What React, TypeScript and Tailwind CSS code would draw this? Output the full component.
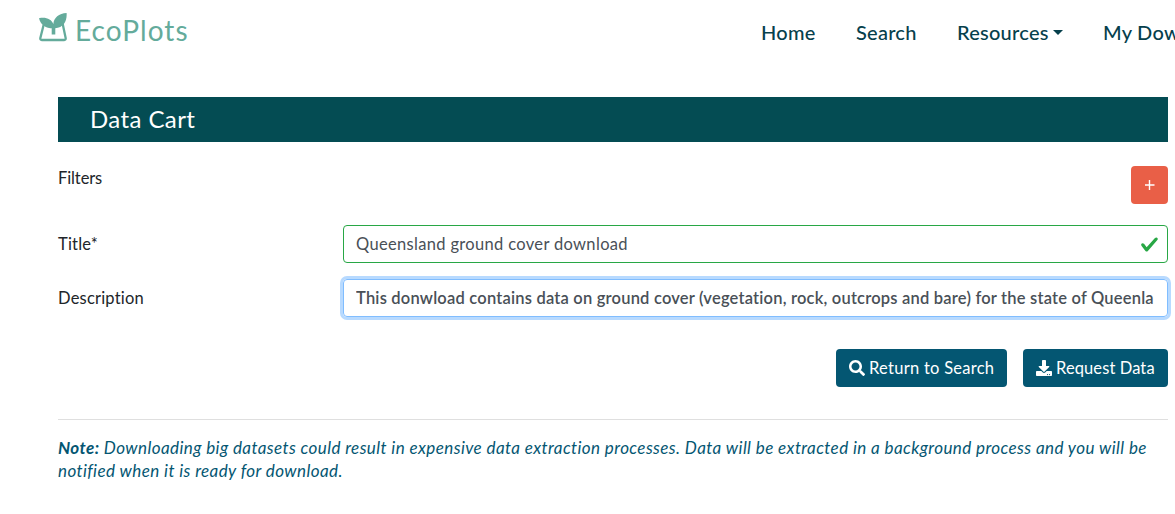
import React from "react";
import { FaDownload, FaSearch } from "react-icons/fa";

function Logo() {
  return (
    <a className="flex items-start text-[#64ab9b]">
      <svg className="mt-[13px] h-[29px] w-[28px] shrink-0" viewBox="0 0 28 29" fill="none">
        <path
          d="M4.6 12 L1.4 24.8 Q0.9 27 2.8 27 H25.2 Q27.1 27 26.6 24.8 L23.4 9.5"
          stroke="currentColor"
          strokeWidth="2.3"
        />
        <path d="M14.5 21.5 V13" stroke="currentColor" strokeWidth="3.6" />
        <path
          d="M0 5.2 C6.5 3.6 12.6 6 14.4 11 C14.6 5 20 0.4 27.6 0.1 C28.2 7.5 24.8 14.8 16 15.2 C7.5 15.8 2 12.7 0 5.2 Z"
          fill="currentColor"
        />
      </svg>
      <span className="mt-[10px] ml-[8px] text-[28px] leading-[40px] tracking-[1.05px]">EcoPlots</span>
    </a>
  );
}

function Header() {
  return (
    <header className="flex h-[97px] w-full items-start overflow-hidden whitespace-nowrap pl-[39px]">
      <div className="w-[722px] shrink-0">
        <Logo />
      </div>
      <nav className="flex shrink-0 pt-[18px] text-[20px] leading-[29px] font-medium tracking-[0.25px] text-[#06404c]">
        <a className="w-[95px] shrink-0">Home</a>
        <a className="w-[101px] shrink-0">Search</a>
        <a className="flex w-[146px] shrink-0">
          Resources
          <span className="mt-[12px] ml-[4px] h-0 w-0 border-x-[5px] border-t-[5px] border-x-transparent border-t-[#06404c]" />
        </a>
        <a className="shrink-0">My Downloads</a>
      </nav>
    </header>
  );
}

const button =
  "flex h-[38px] items-center rounded-[4px] bg-[#045672] pb-[1px] text-[16.5px] leading-[24px] text-white whitespace-nowrap";

export default function App() {
  return (
    <div className="h-[514px] w-full overflow-hidden bg-white font-['Lato','Liberation_Sans',sans-serif] text-[16.5px] leading-[24px] tracking-[0.2px] text-[#212529]">
      <Header />
      <main className="ml-[58px] w-[1110px]">
        <h1 className="h-[45px] bg-[#044c53] pl-[32px] text-[24px] leading-[44px] tracking-[0.4px] text-white">
          Data Cart
        </h1>

        <div className="mt-[24px] flex h-[38px] justify-between">
          <span className="tracking-[-0.1px]">Filters</span>
          <button className="flex h-[38px] w-[37px] items-center justify-center rounded-[4px] bg-[#e95f47] text-white">
            <svg className="h-[10px] w-[10px]" viewBox="0 0 10 10" stroke="currentColor" strokeWidth="1.4">
              <path d="M4.5 0V10M0 5H9.5" />
            </svg>
          </button>
        </div>

        <div className="mt-[21px] flex h-[38px] items-center">
          <label className="w-[285px] shrink-0 tracking-[0.2px]">Title*</label>
          <div className="flex h-[38px] flex-1 items-center justify-between rounded-[4px] border border-[#28a745] pr-[8.5px] pl-[12px] tracking-[0.33px] text-[#495057]">
            <span>Queensland ground cover download</span>
            <svg className="h-[19px] w-[19px]" viewBox="0 0 8 8">
              <path
                fill="#28a745"
                d="M2.3 6.73L.6 4.53c-.4-1.04.46-1.4 1.1-.8l1.1 1.4 3.4-3.8c.6-.63 1.6-.27 1.2.7l-4 4.6c-.43.5-.8.4-1.1.1z"
              />
            </svg>
          </div>
        </div>

        <div className="mt-[16px] flex h-[38px] items-center">
          <label className="w-[285px] shrink-0 pb-[1px]">Description</label>
          <div className="flex h-[38px] min-w-0 flex-1 items-center rounded-[4px] border border-[#80bdff] px-[12px] font-semibold text-[#495057] shadow-[0_0_0_3px_#b8daff]">
            <span className="overflow-hidden pb-[1px] whitespace-nowrap">
              This donwload contains data on ground cover (vegetation, rock, outcrops and bare) for the state of Queenla
            </span>
          </div>
        </div>

        <div className="mt-[32px] flex justify-end gap-[16px]">
          <button className={`${button} w-[171px] pl-[13px] tracking-[0.27px]`}>
            <FaSearch className="mr-[4px] h-[16px] w-[16px]" />
            <span>Return to Search</span>
          </button>
          <button className={`${button} w-[145px] pl-[13px] tracking-[0.1px]`}>
            <FaDownload className="mr-[4px] h-[16px] w-[16px]" />
            <span>Request Data</span>
          </button>
        </div>

        <hr className="mt-[32px] border-t border-[#dfdfdf]" />

        <p className="mt-[16px] text-[17px] leading-[23px] tracking-[0.41px] text-[#045672] italic">
          <span className="block whitespace-nowrap">
            <b>Note:</b> Downloading big datasets could result in expensive data extraction processes. Data will be
            extracted in a background process and you will be
          </span>
          <span className="block whitespace-nowrap">notified when it is ready for download.</span>
        </p>
      </main>
    </div>
  );
}
